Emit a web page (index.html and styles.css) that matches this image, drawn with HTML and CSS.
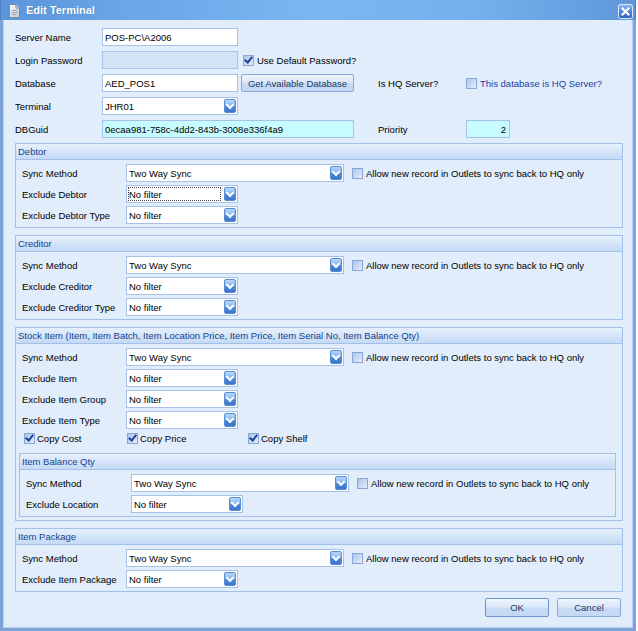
FILE: index.html
```html
<!DOCTYPE html>
<html>
<head>
<meta charset="utf-8">
<title>Edit Terminal</title>
<link rel="stylesheet" href="styles.css">
</head>
<body>
<div class="window">
  <div class="titlebar">
    <svg class="ticon" width="11" height="14" viewBox="0 0 11 14">
      <defs><linearGradient id="pg" x1="0" y1="0" x2="1" y2="1"><stop offset="0" stop-color="#ffffff"/><stop offset="1" stop-color="#b9c3cf"/></linearGradient></defs>
      <path d="M0.5 0.5 H7 L10.5 4 V13.5 H0.5 Z" fill="url(#pg)" stroke="#7d8a99"/>
      <path d="M7 0.5 V4 H10.5" fill="#d9dee5" stroke="#7d8a99"/>
      <path d="M2.5 6.5 H8.5 M2.5 8.5 H8.5 M2.5 10.5 H7" stroke="#9aa6b4" stroke-width="1"/>
    </svg>
    <span class="title">Edit Terminal</span>
    <span class="close">
      <svg width="15" height="15" viewBox="0 0 15 15">
        <defs><linearGradient id="cg" x1="0" y1="0" x2="0" y2="1"><stop offset="0" stop-color="#8fbaf0"/><stop offset="0.5" stop-color="#4f86dc"/><stop offset="1" stop-color="#2f5fbf"/></linearGradient></defs>
        <rect x="0.5" y="0.5" width="14" height="14" rx="2" fill="url(#cg)" stroke="#dfe9f7"/>
        <path d="M4.5 4.5 L10.5 10.5 M10.5 4.5 L4.5 10.5" stroke="#fff" stroke-width="2.2" stroke-linecap="square"/>
      </svg>
    </span>
  </div>
  <div class="frame">
    <div class="top">
      <div class="frow">
        <span class="lbl">Server Name</span>
        <span class="inp w136">POS-PC\A2006</span>
      </div>
      <div class="frow">
        <span class="lbl">Login Password</span>
        <span class="inp w136 disabled"></span>
        <span class="chk checked chk-pw"></span>
        <span class="ctext">Use Default Password?</span>
      </div>
      <div class="frow">
        <span class="lbl">Database</span>
        <span class="mid">
          <span class="inp w136">AED_POS1</span>
          <span class="btn getdb">Get Available Database</span>
        </span>
        <span class="lbl2">Is HQ Server?</span>
        <span class="chk"></span>
        <span class="ctext link">This database is HQ Server?</span>
      </div>
      <div class="frow">
        <span class="lbl">Terminal</span>
        <span class="combo w136"><span class="val">JHR01</span><span class="dd"></span></span>
      </div>
      <div class="frow">
        <span class="lbl">DBGuid</span>
        <span class="mid">
          <span class="inp cyan w252">0ecaa981-758c-4dd2-843b-3008e336f4a9</span>
        </span>
        <span class="lbl2">Priority</span>
        <span class="inp cyan w44 num">2</span>
      </div>
    </div>

    <div class="group">
      <div class="ghead">Debtor</div>
      <div class="gbody">
        <div class="grow">
          <span class="glbl">Sync Method</span>
          <span class="combo wide"><span class="val">Two Way Sync</span><span class="dd"></span></span>
          <span class="chk gchk"></span>
          <span class="ctext">Allow new record in Outlets to sync back to HQ only</span>
        </div>
        <div class="grow">
          <span class="glbl">Exclude Debtor</span>
          <span class="combo small"><span class="val focus">No filter</span><span class="dd"></span></span>
        </div>
        <div class="grow">
          <span class="glbl">Exclude Debtor Type</span>
          <span class="combo small"><span class="val">No filter</span><span class="dd"></span></span>
        </div>
      </div>
    </div>

    <div class="group">
      <div class="ghead">Creditor</div>
      <div class="gbody">
        <div class="grow">
          <span class="glbl">Sync Method</span>
          <span class="combo wide"><span class="val">Two Way Sync</span><span class="dd"></span></span>
          <span class="chk gchk"></span>
          <span class="ctext">Allow new record in Outlets to sync back to HQ only</span>
        </div>
        <div class="grow">
          <span class="glbl">Exclude Creditor</span>
          <span class="combo small"><span class="val">No filter</span><span class="dd"></span></span>
        </div>
        <div class="grow">
          <span class="glbl">Exclude Creditor Type</span>
          <span class="combo small"><span class="val">No filter</span><span class="dd"></span></span>
        </div>
      </div>
    </div>

    <div class="group">
      <div class="ghead">Stock Item (Item, Item Batch, Item Location Price, Item Price, Item Serial No, Item Balance Qty)</div>
      <div class="gbody">
        <div class="grow">
          <span class="glbl">Sync Method</span>
          <span class="combo wide"><span class="val">Two Way Sync</span><span class="dd"></span></span>
          <span class="chk gchk"></span>
          <span class="ctext">Allow new record in Outlets to sync back to HQ only</span>
        </div>
        <div class="grow">
          <span class="glbl">Exclude Item</span>
          <span class="combo small"><span class="val">No filter</span><span class="dd"></span></span>
        </div>
        <div class="grow">
          <span class="glbl">Exclude Item Group</span>
          <span class="combo small"><span class="val">No filter</span><span class="dd"></span></span>
        </div>
        <div class="grow">
          <span class="glbl">Exclude Item Type</span>
          <span class="combo small"><span class="val">No filter</span><span class="dd"></span></span>
        </div>
        <div class="copyrow">
          <span class="citem"><span class="chk checked"></span><span class="ctext">Copy Cost</span></span>
          <span class="citem"><span class="chk checked"></span><span class="ctext">Copy Price</span></span>
          <span class="citem"><span class="chk checked"></span><span class="ctext">Copy Shelf</span></span>
        </div>
        <div class="group nested">
          <div class="ghead">Item Balance Qty</div>
          <div class="gbody">
            <div class="grow">
              <span class="glbl">Sync Method</span>
              <span class="combo wide"><span class="val">Two Way Sync</span><span class="dd"></span></span>
              <span class="chk gchk"></span>
              <span class="ctext">Allow new record in Outlets to sync back to HQ only</span>
            </div>
            <div class="grow">
              <span class="glbl">Exclude Location</span>
              <span class="combo small"><span class="val">No filter</span><span class="dd"></span></span>
            </div>
          </div>
        </div>
      </div>
    </div>

    <div class="group">
      <div class="ghead">Item Package</div>
      <div class="gbody">
        <div class="grow">
          <span class="glbl">Sync Method</span>
          <span class="combo wide"><span class="val">Two Way Sync</span><span class="dd"></span></span>
          <span class="chk gchk"></span>
          <span class="ctext">Allow new record in Outlets to sync back to HQ only</span>
        </div>
        <div class="grow">
          <span class="glbl">Exclude Item Package</span>
          <span class="combo small"><span class="val">No filter</span><span class="dd"></span></span>
        </div>
      </div>
    </div>

    <div class="buttons">
      <span class="btn dlg default">OK</span>
      <span class="btn dlg">Cancel</span>
    </div>
  </div>
</div>
</body>
</html>
```
FILE: styles.css
```css
* { box-sizing: border-box; }
html, body { margin: 0; padding: 0; background: #ffffff; }
body {
  font-family: "Liberation Sans", Arial, sans-serif;
  font-size: 9.5px;
  color: #000;
}
.window {
  width: 636px;
  height: 631px;
  display: flex;
  flex-direction: column;
}
.titlebar {
  height: 20px;
  flex: none;
  display: flex;
  align-items: center;
  padding-left: 8px;
  background: linear-gradient(to right, #5b95da 0%, #6aa6e8 20%, #7ab7f2 50%, #74b0ee 75%, #5f97d8 100%);
  border-left: 1px solid #4c7fc2;
  border-right: 1px solid #4c7fc2;
}
.ticon { margin-top: 1px; }
.title {
  margin-left: 6px;
  color: #fff;
  font-weight: bold;
  font-size: 11px;
  text-shadow: 0 0 1px #3d6aa8;
  flex: 1;
}
.close { display: flex; margin-right: 2px; margin-top: 2px; }
.frame {
  flex: 1;
  background: #e1edfb;
  border: 3px solid #7ca4da;
  border-top: 0;
  box-shadow: inset 1px 0 0 #b8d0ef, inset -1px 0 0 #b8d0ef, inset 0 -1px 0 #b8d0ef;
  padding: 8px 10px 0 12px;
}
.frow {
  display: flex;
  align-items: center;
  height: 18px;
  margin-bottom: 5px;
}
.top { margin-bottom: 1px; }
.lbl { width: 87px; flex: none; }
.mid { width: 276px; flex: none; display: flex; align-items: center; }
.lbl2 { width: 88px; flex: none; }
.inp {
  height: 18px;
  background: #fff;
  border: 1px solid #a6c2e6;
  padding-left: 2px;
  display: flex;
  align-items: center;
  white-space: nowrap;
  overflow: hidden;
  flex: none;
}
.inp.disabled { background: #d3e2f4; border-color: #a9c3e4; }
.inp.cyan { background: #c6fcff; }
.inp.num { justify-content: flex-end; padding-right: 3px; }
.w136 { width: 136px; }
.w252 { width: 252px; }
.w44 { width: 44px; }
.combo {
  height: 18px;
  background: #fff;
  border: 1px solid #a6c2e6;
  padding-left: 2px;
  display: flex;
  align-items: center;
  flex: none;
}
.combo .val { flex: 1; white-space: nowrap; }
.combo .val.focus {
  align-self: stretch;
  display: flex;
  align-items: center;
  margin: 1px 3px 1px -1px;
  outline: 1px dotted #444;
  outline-offset: -1px;
  padding-left: 1px;
}
.dd {
  width: 12px;
  height: 14px;
  margin-right: 1px;
  border-radius: 2px;
  background: linear-gradient(#b8d6fa 0%, #8ab8f0 45%, #4c88dc 55%, #3a74cc 100%);
  border: 1px solid #5a8cd3;
  display: flex;
  align-items: center;
  justify-content: center;
  flex: none;
}
.dd::after {
  content: "";
  width: 4px;
  height: 4px;
  border-right: 2px solid #fff;
  border-bottom: 2px solid #fff;
  transform: rotate(45deg);
  margin-top: -3px;
}
.chk {
  width: 11px;
  height: 11px;
  flex: none;
  border: 1px solid #89a7d2;
  background: linear-gradient(135deg, #aec7ec 0%, #c9daf3 55%, #e6effb 100%);
  display: inline-flex;
  align-items: center;
  justify-content: center;
}
.chk.checked::after {
  content: "";
  width: 3px;
  height: 6px;
  border-right: 2px solid #20409a;
  border-bottom: 2px solid #20409a;
  transform: rotate(40deg);
  margin-top: -2px;
}
.chk-pw { margin-left: 5px; }
.ctext { margin-left: 3px; white-space: nowrap; }
.ctext.link { color: #1f3fa8; }
.btn {
  display: flex;
  align-items: center;
  justify-content: center;
  height: 18px;
  border: 1px solid #86a9d6;
  border-radius: 2px;
  background: linear-gradient(#eef4fd 0%, #dce9fa 45%, #c8dbf5 55%, #c3d8f4 100%);
  color: #1e3966;
  flex: none;
}
.getdb { width: 113px; margin-left: 3px; }
.group {
  border: 1px solid #a3c0e8;
  margin-bottom: 7px;
}
.ghead {
  height: 16px;
  border-bottom: 1px solid #a3c0e8;
  background: linear-gradient(#e6f0fc 0%, #d9e7f9 40%, #c4daf5 100%);
  color: #15428b;
  padding-left: 2px;
  display: flex;
  align-items: center;
  white-space: nowrap;
}
.gbody {
  padding: 4px 3px 3px 3px;
}
.grow {
  display: flex;
  align-items: center;
  height: 18px;
  margin-bottom: 3px;
}
.gbody > .grow:last-of-type { margin-bottom: 0; }
.glbl { width: 107px; padding-left: 3px; flex: none; white-space: nowrap; }
.nested .glbl { width: 108px; }
.combo.wide { width: 218px; }
.combo.small { width: 112px; }
.gchk { margin-left: 8px; }
.copyrow {
  display: grid;
  grid-template-columns: 103px 121px auto;
  height: 12px;
  margin-top: 3px;
  padding-left: 5px;
  align-items: center;
}
.citem { display: flex; align-items: center; }
.citem .ctext { margin-left: 2px; }
.group.nested { margin: 9px 3px 0 0; }
.buttons {
  display: flex;
  justify-content: flex-end;
  gap: 8px;
  margin-top: -1px;
  padding-right: 2px;
}
.dlg { width: 64px; height: 19px; }
.dlg.default { border-color: #6d95cc; }
```
